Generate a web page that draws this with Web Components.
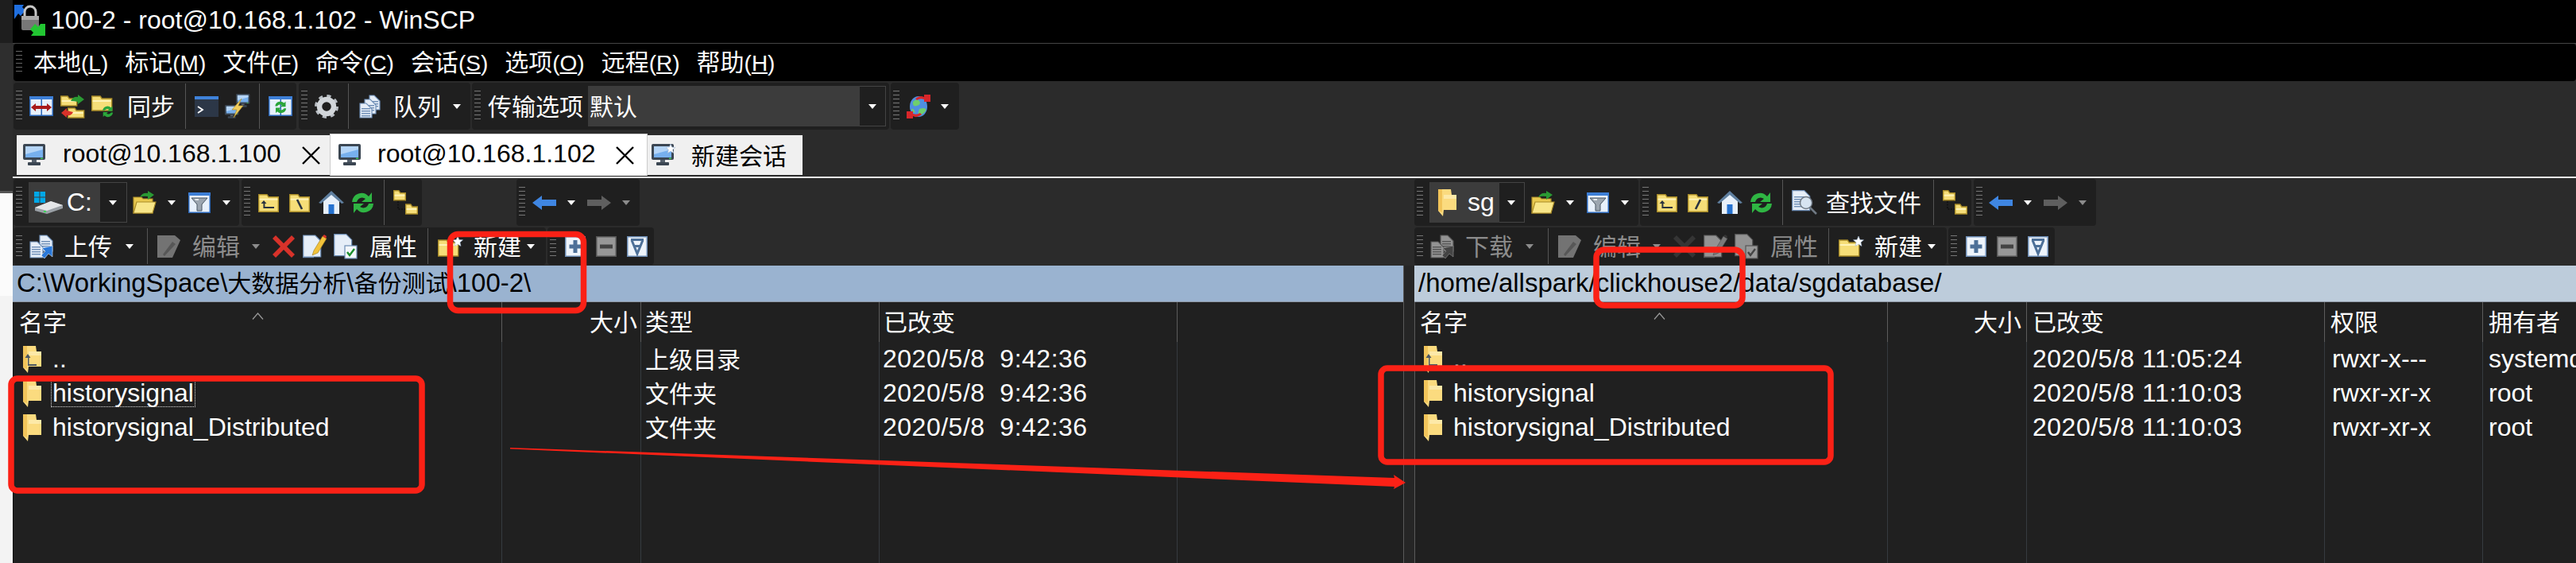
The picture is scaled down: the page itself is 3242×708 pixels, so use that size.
<!DOCTYPE html>
<html lang="zh">
<head>
<meta charset="utf-8">
<title>100-2 - root@10.168.1.102 - WinSCP</title>
<style>
  html, body { margin: 0; padding: 0; background: #2b2b2b; }
  body { width: 3242px; height: 708px; overflow: hidden; font-family: "Liberation Sans", "Noto Sans CJK SC", sans-serif; font-size: 32px; }
</style>
</head>
<body>
<winscp-app>
  <title-bar>100-2 - root@10.168.1.102 - WinSCP</title-bar>
  <menu-bar>
    <menu-item key="L">本地</menu-item><menu-item key="M">标记</menu-item><menu-item key="F">文件</menu-item><menu-item key="C">命令</menu-item>
    <menu-item key="S">会话</menu-item><menu-item key="O">选项</menu-item><menu-item key="R">远程</menu-item><menu-item key="H">帮助</menu-item>
  </menu-bar>

  <tool-row style="height:59px;margin:2px 0 4px;padding-left:1px">
    <tool-band w="356">
      <tool-icon name="syncbrowse" w="39"></tool-icon><tool-icon name="foldersync" w="39"></tool-icon><tool-icon name="foldersync2" w="45"></tool-icon>
      <tool-label w="73">同步</tool-label><tool-sep w="12"></tool-sep>
      <tool-icon name="terminal" w="38"></tool-icon><tool-icon name="computers" w="43"></tool-icon><tool-sep w="12"></tool-sep>
      <tool-icon name="syncblue" w="30"></tool-icon>
    </tool-band>
    <tool-band w="216" style="margin-left:3px">
      <tool-icon name="gear" w="42"></tool-icon><tool-sep w="14"></tool-sep><tool-icon name="queue" w="43"></tool-icon>
      <tool-label w="75">队列</tool-label><tool-arrow w="11"></tool-arrow>
    </tool-band>
    <tool-band w="525" style="margin-left:2px">
      <tool-label w="126">传输选项</tool-label>
      <tool-combo w="375" btn="33" pad="2"><tool-label>默认</tool-label></tool-combo>
    </tool-band>
    <tool-band w="86" style="margin-left:2px">
      <tool-icon name="globe" w="43"></tool-icon><tool-arrow w="11"></tool-arrow>
    </tool-band>
  </tool-row>

  <session-tabs>
    <session-tab icon="monitor" w="394" pad="8" gap="22" style="margin-left:5px" closable>root@10.168.1.100</session-tab>
    <session-tab icon="monitor" w="400" pad="10" gap="21" active closable>root@10.168.1.102</session-tab>
    <session-tab icon="monitornew" w="195" pad="5" gap="20" cjk>新建会话</session-tab>
  </session-tabs>

  <split-view>
    <file-pane slot="left">
      <tool-row slot="bar" style="height:59px;padding-left:1px">
        <tool-band w="284" pad="19">
          <tool-combo w="124" btn="34" pad="7" gap="5"><tool-icon name="drive"></tool-icon><span>C:</span></tool-combo>
          <tool-icon name="folderopen" w="44" style="margin-left:7px"></tool-icon><tool-arrow w="26"></tool-arrow>
          <tool-icon name="filter" w="43"></tool-icon><tool-arrow w="11"></tool-arrow>
        </tool-band>
        <tool-band w="227" pad="21" style="margin-left:3px">
          <tool-icon name="parent" w="39"></tool-icon><tool-icon name="rootback" w="37"></tool-icon><tool-icon name="home" w="40"></tool-icon><tool-icon name="refresh" w="42"></tool-icon>
          <tool-sep w="12"></tool-sep><tool-icon name="tree" w="31"></tool-icon>
        </tool-band>
        <tool-band w="155" style="margin-left:119px">
          <tool-icon name="back" w="44"></tool-icon><tool-arrow w="25"></tool-arrow><tool-icon name="forward" w="44" off></tool-icon><tool-arrow w="11" off></tool-arrow>
        </tool-band>
      </tool-row>
      <tool-row slot="bar" style="height:47px;margin:2px 0 1px;padding-left:1px">
        <tool-band w="670" grip="6">
          <tool-icon name="upload" w="44"></tool-icon><tool-label w="77">上传</tool-label><tool-arrow w="27"></tool-arrow><tool-sep w="13"></tool-sep>
          <tool-icon name="edit" w="44" off></tool-icon><tool-label w="75" off>编辑</tool-label><tool-arrow w="26" off></tool-arrow>
          <tool-icon name="del" w="38"></tool-icon><tool-icon name="note" w="39"></tool-icon><tool-icon name="props" w="45"></tool-icon>
          <tool-label w="73">属性</tool-label><tool-sep w="13"></tool-sep><tool-icon name="newfolder" w="45"></tool-icon>
          <tool-label w="67">新建</tool-label><tool-arrow w="11"></tool-arrow>
        </tool-band>
        <tool-band w="134" pad="22" grip="6" style="margin-left:2px">
          <tool-icon name="plus" w="39"></tool-icon><tool-icon name="minus" w="39" off></tool-icon><tool-icon name="invert" w="26"></tool-icon>
        </tool-band>
      </tool-row>
      <path-bar slot="path" tone="#9ab3d0">C:\WorkingSpace\<b>大数据分析</b>\<b>备份测试</b>\100-2\</path-bar>
      <file-list style="--cols:614px 175px 300px 375px 1fr;--edge:#111">
        <file-row head>
          <file-cell cjk pad="7">名字<sort-caret></sort-caret></file-cell>
          <file-cell cjk align="right" pad="4">大小</file-cell>
          <file-cell cjk pad="5">类型</file-cell>
          <file-cell cjk pad="5">已改变</file-cell>
          <file-cell></file-cell>
        </file-row>
        <file-row>
          <file-cell pad="12"><tool-icon name="flistup"></tool-icon><file-name>..</file-name></file-cell><file-cell></file-cell>
          <file-cell cjk pad="5">上级目录</file-cell><file-cell pad="4" date>2020/5/8&nbsp; 9:42:36</file-cell><file-cell></file-cell>
        </file-row>
        <file-row>
          <file-cell pad="12"><tool-icon name="flist"></tool-icon><file-name focused>historysignal</file-name></file-cell><file-cell></file-cell>
          <file-cell cjk pad="5">文件夹</file-cell><file-cell pad="4" date>2020/5/8&nbsp; 9:42:36</file-cell><file-cell></file-cell>
        </file-row>
        <file-row>
          <file-cell pad="12"><tool-icon name="flist"></tool-icon><file-name>historysignal_Distributed</file-name></file-cell><file-cell></file-cell>
          <file-cell cjk pad="5">文件夹</file-cell><file-cell pad="4" date>2020/5/8&nbsp; 9:42:36</file-cell><file-cell></file-cell>
        </file-row>
        <file-row filler><file-cell></file-cell><file-cell></file-cell><file-cell></file-cell><file-cell></file-cell><file-cell></file-cell></file-row>
      </file-list>
    </file-pane>

    <file-pane slot="right">
      <tool-row slot="bar" style="height:59px">
        <tool-band w="282" pad="19">
          <tool-combo w="120" btn="32" pad="11" gap="14"><tool-icon name="flist"></tool-icon><span>sg</span></tool-combo>
          <tool-icon name="folderopen" w="44" style="margin-left:8px"></tool-icon><tool-arrow w="26"></tool-arrow>
          <tool-icon name="filter" w="43"></tool-icon><tool-arrow w="11"></tool-arrow>
        </tool-band>
        <tool-band w="417" pad="21" style="margin-left:2px">
          <tool-icon name="parent" w="39"></tool-icon><tool-icon name="rootslash" w="37"></tool-icon><tool-icon name="home" w="40"></tool-icon><tool-icon name="refresh" w="42"></tool-icon>
          <tool-sep w="12"></tool-sep><tool-icon name="find" w="43"></tool-icon><tool-label w="135">查找文件</tool-label><tool-sep w="12"></tool-sep><tool-icon name="tree" w="31"></tool-icon>
        </tool-band>
        <tool-band w="154" pad="19" style="margin-left:3px">
          <tool-icon name="back" w="44"></tool-icon><tool-arrow w="25"></tool-arrow><tool-icon name="forward" w="44" off></tool-icon><tool-arrow w="11" off></tool-arrow>
        </tool-band>
      </tool-row>
      <tool-row slot="bar" style="height:47px;margin:2px 0 1px">
        <tool-band w="670" grip="6">
          <tool-icon name="upload" w="44" off></tool-icon><tool-label w="76" off>下载</tool-label><tool-arrow w="28" off></tool-arrow><tool-sep w="13"></tool-sep>
          <tool-icon name="edit" w="44" off></tool-icon><tool-label w="75" off>编辑</tool-label><tool-arrow w="26" off></tool-arrow>
          <tool-icon name="del" w="38" off></tool-icon><tool-icon name="note" w="39" off></tool-icon><tool-icon name="props" w="45" off></tool-icon>
          <tool-label w="73" off>属性</tool-label><tool-sep w="13"></tool-sep><tool-icon name="newfolder" w="45"></tool-icon>
          <tool-label w="67">新建</tool-label><tool-arrow w="11"></tool-arrow>
        </tool-band>
        <tool-band w="134" pad="22" grip="6" style="margin-left:2px">
          <tool-icon name="plus" w="39"></tool-icon><tool-icon name="minus" w="39" off></tool-icon><tool-icon name="invert" w="26"></tool-icon>
        </tool-band>
      </tool-row>
      <path-bar slot="path" tone="#bdccdb">/home/allspark/clickhouse2/data/sgdatabase/</path-bar>
      <file-list style="--cols:594px 175px 375px 199px 1fr;--edge:#5a5a5a">
        <file-row head>
          <file-cell cjk pad="6">名字<sort-caret></sort-caret></file-cell>
          <file-cell cjk align="right" pad="6">大小</file-cell>
          <file-cell cjk>已改变</file-cell>
          <file-cell cjk>权限</file-cell>
          <file-cell cjk>拥有者</file-cell>
        </file-row>
        <file-row>
          <file-cell pad="11"><tool-icon name="flistup"></tool-icon><file-name>..</file-name></file-cell><file-cell></file-cell>
          <file-cell date>2020/5/8 11:05:24</file-cell><file-cell pad="9">rwxr-x---</file-cell><file-cell>systemd</file-cell>
        </file-row>
        <file-row>
          <file-cell pad="11"><tool-icon name="flist"></tool-icon><file-name>historysignal</file-name></file-cell><file-cell></file-cell>
          <file-cell date>2020/5/8 11:10:03</file-cell><file-cell pad="9">rwxr-xr-x</file-cell><file-cell>root</file-cell>
        </file-row>
        <file-row>
          <file-cell pad="11"><tool-icon name="flist"></tool-icon><file-name>historysignal_Distributed</file-name></file-cell><file-cell></file-cell>
          <file-cell date>2020/5/8 11:10:03</file-cell><file-cell pad="9">rwxr-xr-x</file-cell><file-cell>root</file-cell>
        </file-row>
        <file-row filler><file-cell></file-cell><file-cell></file-cell><file-cell></file-cell><file-cell></file-cell><file-cell></file-cell></file-row>
      </file-list>
    </file-pane>
  </split-view>

  <red-marks></red-marks>
</winscp-app>

<script>
// small pieces the icons share
const fold = (x, y, w, h) => `<path d="M${x} ${y + h}V${y + 1}h${w * .42}l2 3H${x + w}V${y + h}z" fill="#f6de78" stroke="#a98c28" stroke-width="1.4"/><rect x="${x + 1}" y="${y + 6}" width="${w - 2}" height="2" fill="#fff3b8"/>`;
const win = (w, h) => `<rect x=".75" y=".75" width="${w - 1.5}" height="${h - 1.5}" fill="#e8f1fb" stroke="#2a66b8" stroke-width="1.5"/><rect width="${w}" height="4" fill="#3c7ed6"/>`;
const page = (x, y, w, h) => `<path d="M${x} ${y}h${w - 7}l7 7V${y + h}H${x}z" fill="#e6eef8" stroke="#6d8db5" stroke-width="1.2"/>`;
const lines = (x, y, w, n) => Array.from({ length: n }, (_, i) => `<rect x="${x}" y="${y + i * 3}" width="${w}" height="1.4" fill="#6d8db5"/>`).join('');
const greenArrows = `<path d="M5 13a10 10 0 0 1 17-6l3-3v10H15l3-3a6 6 0 0 0-9 2z" fill="#2aa53a"/><path d="M26 17a10 10 0 0 1-17 6l-3 3V16h10l-3 3a6 6 0 0 0 9-2z" fill="#2aa53a"/>`;
const monitor = `<rect width="28" height="20" rx="2" fill="#3b4652"/><rect x="3" y="3" width="22" height="14" fill="#77b0ee"/><path d="M3 3h22v4L3 13z" fill="#b5d5f7"/><rect x="22" y="17.6" width="3" height="1.4" fill="#3fd25a"/><rect x="11" y="20" width="6" height="3" fill="#56616d"/><rect x="6" y="23" width="16" height="4" rx="1" fill="#3b4652"/>`;
const folderList = `<path d="M0 0H16L17 7H23V26H7L6 34L0 27Z" fill="#fbdb7f"/><path d="M0 0H5V29L0 27Z" fill="#f1c45a"/><path d="M7 7H23V12H7Z" fill="#fde9a8"/>`;

const ICONS = {
  syncbrowse: [30, 25, win(30, 25) + `<rect x="14.5" y="4" width="1.5" height="20" fill="#2a66b8"/><path d="M2 14l6-5v3h14V9l6 5-6 5v-3H8v3z" fill="#a81a1a"/>`],
  foldersync: [30, 30, fold(.7, 1, 20, 13) + fold(9.7, 16, 20, 13) + `<path d="M13 8q3-6 9-5V0l8 6-8 6V9q-5-1-9-1z" fill="#2a9a33"/><path d="M16 22q-2 5-8 4v3l-7-6 7-6v3q4 1 8 2z" fill="#d8322a"/>`],
  foldersync2: [31, 30, fold(.7, 1, 25, 19) + `<g transform="translate(11 12) scale(.62)">${greenArrows}</g>`],
  terminal: [30, 26, `<rect width="30" height="26" fill="#2c3747"/><rect width="30" height="4" fill="#3f82da"/><path d="M4 13l6 4-6 4" fill="none" stroke="#fff" stroke-width="1.8"/>`],
  computers: [32, 32, `<g transform="translate(14 0) scale(.62)">${monitor}</g><g transform="translate(0 14) scale(.62)">${monitor}</g><path d="M21 6L9 20h6l-4 10 12-15h-6z" fill="#f0cc5c" stroke="#a98c28" stroke-width=".6"/>`],
  syncblue: [30, 25, win(30, 25) + `<rect x="14.5" y="4" width="1.5" height="20" fill="#2a66b8"/><g transform="translate(5 4) scale(.66)">${greenArrows}</g>`],
  gear: [30, 30, `<circle cx="15" cy="15" r="13" fill="none" stroke="#b9bec4" stroke-width="4" stroke-dasharray="5 5.2"/><circle cx="15" cy="15" r="9" fill="none" stroke="#d2d6da" stroke-width="6.5"/>`],
  queue: [27, 30, page(13, 1, 13, 18) + lines(15, 8, 9, 3) + page(7, 6, 14, 18) + lines(9, 13, 10, 3) + page(1, 11, 15, 18) + lines(3, 17, 11, 4)],
  globe: [30, 30, `<ellipse cx="15" cy="15" rx="11" ry="13" fill="#4f8fe0"/><path d="M8 9q5-5 8-1t-3 6-5-5zM16 18q6-2 8 0t-5 7-3-7zM6 18q3-1 5 5-4-1-5-5z" fill="#6fcf6c"/><path d="M11 5q6-5 11-2V0h8v9h-8V6q-5-2-9 1z" fill="#d8262a"/><path d="M19 25q-6 5-11 2v3H0v-9h8v3q5 2 9-1z" fill="#d8262a"/>`],
  monitor: [28, 28, monitor],
  monitornew: [30, 28, monitor + `<path d="M24 0l1.6 4 4.4.4-3.3 2.8 1 4.3L24 9.2l-3.7 2.3 1-4.3L18 4.4l4.4-.4z" fill="#fff" stroke="#9fb7d3" stroke-width=".6"/>`],
  drive: [36, 28, `<g fill="#00a8e8"><rect width="6.5" height="6.5"/><rect x="7.5" width="6.5" height="6.5"/><rect y="7.5" width="6.5" height="6.5"/><rect x="7.5" y="7.5" width="6.5" height="6.5"/></g><path d="M1 20l20-8 15 5v4L16 28 1 24z" fill="#9aa0a6"/><path d="M1 20l20-8 15 5-20 7z" fill="#e4e6e8"/><rect x="12" y="24" width="3" height="2" fill="#3fd25a"/>`],
  folderopen: [29, 29, `<path d="M1 28V8h10l2 2h12v18z" fill="#e9c94f" stroke="#a98c28" stroke-width="1.2"/><path d="M1 28l4-14h24l-4 14z" fill="#f8e689" stroke="#a98c28" stroke-width="1.2"/><path d="M9 8q3-6 10-5V0l8 5-8 6V7q-6-1-10 1z" fill="#2a9a33"/>`],
  filter: [28, 26, win(28, 26) + `<path d="M4 7h20l-7 8v8h-6v-8z" fill="#9ca6b0" stroke="#4b5763"/><path d="M8 8h5v2h-4z" fill="#e6e9ec"/>`],
  parent: [26, 24, fold(.7, .7, 24.6, 22.6) + `<path d="M7 9l3.5 4H8.4v4H20v2H6.4v-6H3.5z" fill="#2b3440"/>`],
  rootback: [26, 24, fold(.7, .7, 24.6, 22.6) + `<path d="M10 8l6 12" stroke="#2b3440" stroke-width="2.6"/>`],
  rootslash: [26, 24, fold(.7, .7, 24.6, 22.6) + `<path d="M16 8l-6 12" stroke="#2b3440" stroke-width="2.6"/>`],
  home: [32, 29, `<path d="M6 13L16 3l10 10v16H6z" fill="#e7f0fa"/><path d="M0 15L16 0l16 15-3 1L16 5 3 16z" fill="#5f7f9f"/><rect x="12.5" y="17" width="7" height="12" fill="#2672cf"/>`],
  refresh: [31, 30, `<path d="M2 14a12 12 0 0 1 21-7l4-5v12H14l5-4a7 7 0 0 0-11 4z" fill="#2fb543"/><path d="M29 16a12 12 0 0 1-21 7l-4 5V16h13l-5 4a7 7 0 0 0 11-4z" fill="#2fb543"/>`],
  tree: [31, 34, fold(.7, .7, 14.6, 13) + fold(15.7, 18, 14.6, 13) + `<path d="M6 15v10h9" fill="none" stroke="#111" stroke-width="1.5" stroke-dasharray="2 1.5"/>`],
  back: [30, 18, `<path d="M0 9L12 0v5h18v8H12v5z" fill="#3f86e2"/>`],
  forward: [30, 18, `<path d="M30 9L18 0v5H0v8h18v5z" fill="#9a9a9a"/>`],
  upload: [30, 30, page(13, 1, 16, 20) + lines(15, 8, 11, 4) + page(1, 9, 16, 20) + lines(3, 15, 11, 4) + `<path d="M29 14v14l-5-4-5 6-4-4 5-5-4-4z" fill="#2a78d8" stroke="#e6eef8" stroke-width=".6"/>`],
  edit: [29, 28, `<path d="M0 0h22l7 6-10 22H0z" fill="#b9b9b9"/><path d="M7 24l12-16 4 3-14 15z" fill="#8c8c8c"/>`],
  del: [28, 28, `<path d="M4 0l10 10L24 0l4 4-10 10 10 10-4 4-10-10L4 28l-4-4 10-10L0 4z" fill="#d8322a"/>`],
  note: [30, 30, page(.7, 1, 22, 27) + `<rect y="28" width="14" height="1.2" fill="#6d8db5"/><path d="M12 26l2-6L25 2l5 3-11 18z" fill="#f2c23a" stroke="#9a7b1f" stroke-width=".6"/><path d="M25 2l2-2 3 2-1 3z" fill="#d8322a"/>`],
  props: [30, 32, page(.7, .7, 22, 27) + `<rect x="14" y="15" width="15" height="16" fill="#f3f7fb" stroke="#6d8db5" stroke-width="1.2"/><path d="M17 23l3 4 6-8" fill="none" stroke="#1c8f2c" stroke-width="2.4"/>`],
  newfolder: [32, 26, fold(.7, 4, 25, 21) + `<path d="M25 0l1.8 4.4 4.7.4-3.6 3 1.1 4.6L25 10l-4 2.4 1.1-4.6-3.6-3 4.7-.4z" fill="#fff" stroke="#9fb7d3" stroke-width=".6"/>`],
  plus: [26, 26, `<rect x=".75" y=".75" width="24.5" height="24.5" fill="#eef4fb" stroke="#6d8db5" stroke-width="1.5"/><path d="M10.5 5h5v5.500h5v5h-5v5.500h-5v-5.500h-5v-5h5z" fill="#4d7098"/>`],
  minus: [26, 26, `<rect x=".75" y=".75" width="24.5" height="24.5" fill="#eef4fb" stroke="#6d8db5" stroke-width="1.5"/><rect x="5" y="10.500" width="16" height="5" fill="#4d7098"/>`],
  invert: [26, 26, `<rect x=".75" y=".75" width="24.5" height="24.5" fill="#eef4fb" stroke="#6d8db5" stroke-width="1.5"/><path d="M5 4.500h16M6 5l7 17 7-17M9 12.500h8" fill="none" stroke="#4d7098" stroke-width="3"/>`],
  find: [32, 31, page(.7, .7, 22, 25) + lines(3, 8, 14, 5) + `<circle cx="18" cy="16" r="7.500" fill="#d7e4f1" stroke="#707a85" stroke-width="1.5"/><path d="M23 22l8 8" stroke="#707a85" stroke-width="2.500"/>`],
  flist: [23, 34, folderList],
  flistup: [23, 34, folderList + `<path d="M6 10l3.500 5H7.500v8H17v2H6V15H2.500z" fill="#4b5763"/>`]
};

class WinscpApp extends HTMLElement {
  constructor() {
    super();
    this.attachShadow({ mode: 'open' }).innerHTML = `
      <style>
        :host { display: flex; position: relative; width: 3242px; height: 708px; overflow: hidden; color: #fff;
          font-family: "Liberation Sans", "Noto Sans CJK SC", sans-serif; font-size: 32px; }
        .strip { flex: none; width: 16px;
          background: linear-gradient(#1e1e1e 0 54px, #2e2e2e 54px 240px, #555 240px 243px, #fbfbfb 243px 372px, #f3f3f3 372px); }
        .main { flex: 1; min-width: 0; display: flex; flex-direction: column; background: #2b2b2b; }
      </style>
      <div class="strip"></div>
      <div class="main"><slot></slot></div>`;
  }
}

class TitleBar extends HTMLElement {
  constructor() {
    super();
    this.attachShadow({ mode: 'open' }).innerHTML = `
      <style>
        :host { display: flex; align-items: center; flex: none; height: 54px; background: #000; border-bottom: 1px solid #444; color: #fff; white-space: nowrap; }
        svg { flex: none; margin: 0 6px 3px 2px; }
        span { padding-bottom: 3px; }
      </style>
      <svg width="40" height="40" viewBox="0 0 40 40">
        <path d="M0 18V0h12l-2 3 4 4-6 7-3-3z" fill="#1f6fe0"/>
        <path d="M13 14V9a7 7 0 0 1 14 0v5" fill="none" stroke="#c5c5c5" stroke-width="3"/>
        <rect x="9" y="14" width="22" height="18" rx="2" fill="#777"/>
        <rect x="9" y="14" width="22" height="5" fill="#aaa"/>
        <path d="M39 39H21l3-4-4-4 6-7 4 4 3-4h6z" fill="#22c632"/>
      </svg>
      <span><slot></slot></span>`;
  }
}

class MenuBar extends HTMLElement {
  constructor() {
    super();
    this.attachShadow({ mode: 'open' }).innerHTML = `
      <style>
        :host { display: flex; align-items: center; flex: none; height: 47px; margin-left: 1px; padding-left: 25px; gap: 21px; background: #000; border-radius: 4px; white-space: nowrap; position: relative; }
        i { position: absolute; left: 3px; top: 9px; width: 8px; height: 30px; background: repeating-linear-gradient(#666 0 1px, transparent 1px 5px); }
      </style>
      <i></i><slot></slot>`;
  }
}

class MenuItem extends HTMLElement {
  connectedCallback() {
    this.attachShadow({ mode: 'open' }).innerHTML = `
      <style>
        :host { display: inline-block; font-size: 30px; line-height: 47px; color: #fff; padding-top: 1px; }
        span { font-size: 28px; }
      </style>
      <slot></slot><span>(<u>${this.getAttribute('key')}</u>)</span>`;
  }
}

class ToolRow extends HTMLElement {
  constructor() {
    super();
    this.attachShadow({ mode: 'open' }).innerHTML = `
      <style>:host { display: flex; align-items: stretch; flex: none; box-sizing: border-box; }</style><slot></slot>`;
  }
}

class ToolBand extends HTMLElement {
  connectedCallback() {
    const pad = this.getAttribute('pad') || 20;
    const n = this.getAttribute('grip') || 8;
    this.attachShadow({ mode: 'open' }).innerHTML = `
      <style>
        :host { display: flex; align-items: center; flex: none; box-sizing: border-box; position: relative; height: 100%;
          width: ${this.getAttribute('w')}px; padding-left: ${pad}px; background: #1f1f1f; border-radius: 4px; }
        i { position: absolute; left: 3px; top: 10px; width: 8px; height: ${n * 5 - 4}px;
          background: repeating-linear-gradient(#777 0 1px, transparent 1px 5px); }
      </style>
      <i></i><slot></slot>`;
  }
}

class ToolIcon extends HTMLElement {
  connectedCallback() {
    const [w, h, body] = ICONS[this.getAttribute('name')];
    const box = this.getAttribute('w') || w;
    this.attachShadow({ mode: 'open' }).innerHTML = `
      <style>
        :host { display: inline-flex; align-items: center; flex: none; width: ${box}px; }
        :host([off]) svg { filter: grayscale(1) brightness(.62); }
        svg { display: block; flex: none; overflow: visible; }
      </style>
      <svg width="${w}" height="${h}" viewBox="0 0 ${w} ${h}">${body}</svg>`;
  }
}

class ToolLabel extends HTMLElement {
  connectedCallback() {
    const w = this.getAttribute('w');
    this.attachShadow({ mode: 'open' }).innerHTML = `
      <style>
        :host { display: block; flex: none; font-size: 30px; line-height: 1; white-space: nowrap; color: #fff; padding-top: 2px; ${w ? `width:${w}px;` : ''} }
        :host([off]) { color: #8c8c8c; }
      </style>
      <slot></slot>`;
  }
}

class ToolArrow extends HTMLElement {
  connectedCallback() {
    this.attachShadow({ mode: 'open' }).innerHTML = `
      <style>
        :host { display: block; flex: none; width: ${this.getAttribute('w') || 11}px; }
        i { display: block; width: 0; height: 0; border: 5.5px solid transparent; border-top: 6px solid #fff; border-bottom: 0; }
        :host([off]) i { border-top-color: #8c8c8c; }
      </style>
      <i></i>`;
  }
}

class ToolSep extends HTMLElement {
  connectedCallback() {
    this.attachShadow({ mode: 'open' }).innerHTML = `
      <style>
        :host { display: block; flex: none; align-self: stretch; width: ${this.getAttribute('w')}px; padding: 1px 0; box-sizing: border-box; }
        i { display: block; width: 1px; height: 100%; background: #555; }
      </style>
      <i></i>`;
  }
}

class ToolCombo extends HTMLElement {
  connectedCallback() {
    const btn = this.getAttribute('btn');
    this.attachShadow({ mode: 'open' }).innerHTML = `
      <style>
        :host { display: flex; flex: none; align-self: center; height: 51px; box-sizing: border-box; width: ${this.getAttribute('w')}px; }
        .text { flex: 1; min-width: 0; display: flex; align-items: center; background: #3c3c3c; white-space: nowrap;
          padding-left: ${this.getAttribute('pad') || 0}px; gap: ${this.getAttribute('gap') || 0}px; }
        .btn { flex: none; display: flex; align-items: center; justify-content: center; box-sizing: border-box; width: ${btn}px; border: 1px solid #444; border-left: 0; }
      </style>
      <div class="text"><slot></slot></div>
      <div class="btn"><tool-arrow></tool-arrow></div>`;
  }
}

class SessionTabs extends HTMLElement {
  constructor() {
    super();
    this.attachShadow({ mode: 'open' }).innerHTML = `
      <style>:host { display: flex; align-items: center; flex: none; height: 55px; border-bottom: 2px solid #e8e8e8; margin-bottom: 1px; }</style>
      <slot></slot>`;
  }
}

class SessionTab extends HTMLElement {
  connectedCallback() {
    const icon = this.getAttribute('icon');
    const closable = this.hasAttribute('closable');
    this.attachShadow({ mode: 'open' }).innerHTML = `
      <style>
        :host { display: flex; align-items: center; flex: none; box-sizing: border-box; height: 50px; margin-top: 1px; background: #f0f0f0; color: #000; white-space: nowrap;
          width: ${this.getAttribute('w')}px; padding-left: ${this.getAttribute('pad')}px; gap: ${this.getAttribute('gap')}px; }
        :host([active]) { background: #fff; height: 53px; margin-top: 0; border: 1px solid #ccc; border-bottom: 0; }
        :host([cjk]) { font-size: 30px; }
        .label { flex: none; min-width: 271px; padding-bottom: 3px; }
        :host([cjk]) .label { min-width: 0; }
        .x { flex: none; margin-left: 5px; display: block; }
      </style>
      <tool-icon name="${icon}"></tool-icon>
      <span class="label"><slot></slot></span>
      ${closable ? `<svg class="x" width="23" height="23" viewBox="0 0 23 23"><path d="M1 1l21 21M22 1L1 22" stroke="#000" stroke-width="2.400"/></svg>` : ''}`;
  }
}

class SplitView extends HTMLElement {
  constructor() {
    super();
    this.attachShadow({ mode: 'open' }).innerHTML = `
      <style>
        :host { display: grid; grid-template-columns: 1750px 14px 1fr; flex: 1; min-height: 0; }
        .splitter { margin-top: 109px; background: #262626; border-left: 1px solid #5a5a5a; }
      </style>
      <slot name="left"></slot><div class="splitter"></div><slot name="right"></slot>`;
  }
}

class FilePane extends HTMLElement {
  constructor() {
    super();
    this.attachShadow({ mode: 'open' }).innerHTML = `
      <style>:host { display: flex; flex-direction: column; min-width: 0; min-height: 0; overflow: hidden; }</style>
      <slot name="bar"></slot><slot name="path"></slot><slot></slot>`;
  }
}

class PathBar extends HTMLElement {
  connectedCallback() {
    this.attachShadow({ mode: 'open' }).innerHTML = `
      <style>
        :host { display: block; flex: none; box-sizing: border-box; height: 46px; line-height: 44px; padding-left: 5px; white-space: nowrap; color: #000; font-size: 33px;
          background: ${this.getAttribute('tone')}; border-bottom: 1px solid #8d97a3; }
        ::slotted(b) { font-weight: normal; font-size: 30px; }
      </style>
      <slot></slot>`;
  }
}

class FileList extends HTMLElement {
  constructor() {
    super();
    this.attachShadow({ mode: 'open' }).innerHTML = `
      <style>
        :host { display: flex; flex-direction: column; flex: 1; min-height: 0; background: #202020; border-left: 1px solid var(--edge); overflow: hidden; }
      </style>
      <slot></slot>`;
  }
}

class FileRow extends HTMLElement {
  constructor() {
    super();
    this.attachShadow({ mode: 'open' }).innerHTML = `
      <style>
        :host { display: grid; grid-template-columns: var(--cols); flex: none; height: 43px; --line: #363b40; }
        :host([head]) { height: 50px; --line: #5c5c5c; }
        :host([filler]) { flex: 1; height: auto; }
      </style>
      <slot></slot>`;
  }
}

class FileCell extends HTMLElement {
  connectedCallback() {
    const right = this.getAttribute('align') === 'right';
    const pad = this.getAttribute('pad') || 7;
    this.attachShadow({ mode: 'open' }).innerHTML = `
      <style>
        :host { display: flex; align-items: center; min-width: 0; box-sizing: border-box; overflow: hidden; white-space: nowrap; color: #fff; position: relative;
          ${right ? `justify-content: flex-end; padding-right: ${pad}px;` : `padding-left: ${pad}px;`} }
        :host(:not(:first-child)) { border-left: 1px solid var(--line); }
        :host([cjk]) { font-size: 30px; padding-bottom: 4px; }
        :host([date]) { letter-spacing: .5px; }
      </style>
      <slot></slot>`;
  }
}

class FileName extends HTMLElement {
  constructor() {
    super();
    this.attachShadow({ mode: 'open' }).innerHTML = `
      <style>
        :host { display: block; margin-left: 13px; line-height: 31px; height: 32px; padding: 0 1px; outline: 0; white-space: nowrap; }
        :host([focused]) { outline: 1px dotted #ddd; }
      </style>
      <slot></slot>`;
  }
}

class SortCaret extends HTMLElement {
  constructor() {
    super();
    this.attachShadow({ mode: 'open' }).innerHTML = `
      <style>
        :host { position: absolute; left: 300px; top: 13px; display: block; }
        svg { display: block; }
      </style>
      <svg width="15" height="9" viewBox="0 0 15 9"><path d="M1 8.500L7.500 1 14 8.500" fill="none" stroke="#9a9a9a" stroke-width="1.200"/></svg>`;
  }
}

// hand-drawn annotations sit on top of the window
class RedMarks extends HTMLElement {
  constructor() {
    super();
    this.attachShadow({ mode: 'open' }).innerHTML = `
      <style>
        :host { position: absolute; left: 0; top: 0; width: 3242px; height: 708px; pointer-events: none; display: block; }
        svg { display: block; }
        rect { fill: none; stroke: #fb2116; stroke-width: 7.500; }
      </style>
      <svg width="3242" height="708" viewBox="0 0 3242 708">
        <rect x="566.500" y="294.500" width="168" height="96" rx="10"/>
        <rect x="14" y="476" width="517" height="141" rx="8"/>
        <rect x="2009" y="314" width="184" height="70" rx="10"/>
        <rect x="1738" y="463" width="566" height="118" rx="8"/>
        <polygon points="642,563 642,564.500 1755,612 1754,615 1769,607 1754,597 1755,601" fill="#fb2116"/>
      </svg>`;
  }
}

customElements.define('winscp-app', WinscpApp);
customElements.define('title-bar', TitleBar);
customElements.define('menu-bar', MenuBar);
customElements.define('menu-item', MenuItem);
customElements.define('tool-row', ToolRow);
customElements.define('tool-band', ToolBand);
customElements.define('tool-icon', ToolIcon);
customElements.define('tool-label', ToolLabel);
customElements.define('tool-arrow', ToolArrow);
customElements.define('tool-sep', ToolSep);
customElements.define('tool-combo', ToolCombo);
customElements.define('session-tabs', SessionTabs);
customElements.define('session-tab', SessionTab);
customElements.define('split-view', SplitView);
customElements.define('file-pane', FilePane);
customElements.define('path-bar', PathBar);
customElements.define('file-list', FileList);
customElements.define('file-row', FileRow);
customElements.define('file-cell', FileCell);
customElements.define('file-name', FileName);
customElements.define('sort-caret', SortCaret);
customElements.define('red-marks', RedMarks);
</script>
</body>
</html>
